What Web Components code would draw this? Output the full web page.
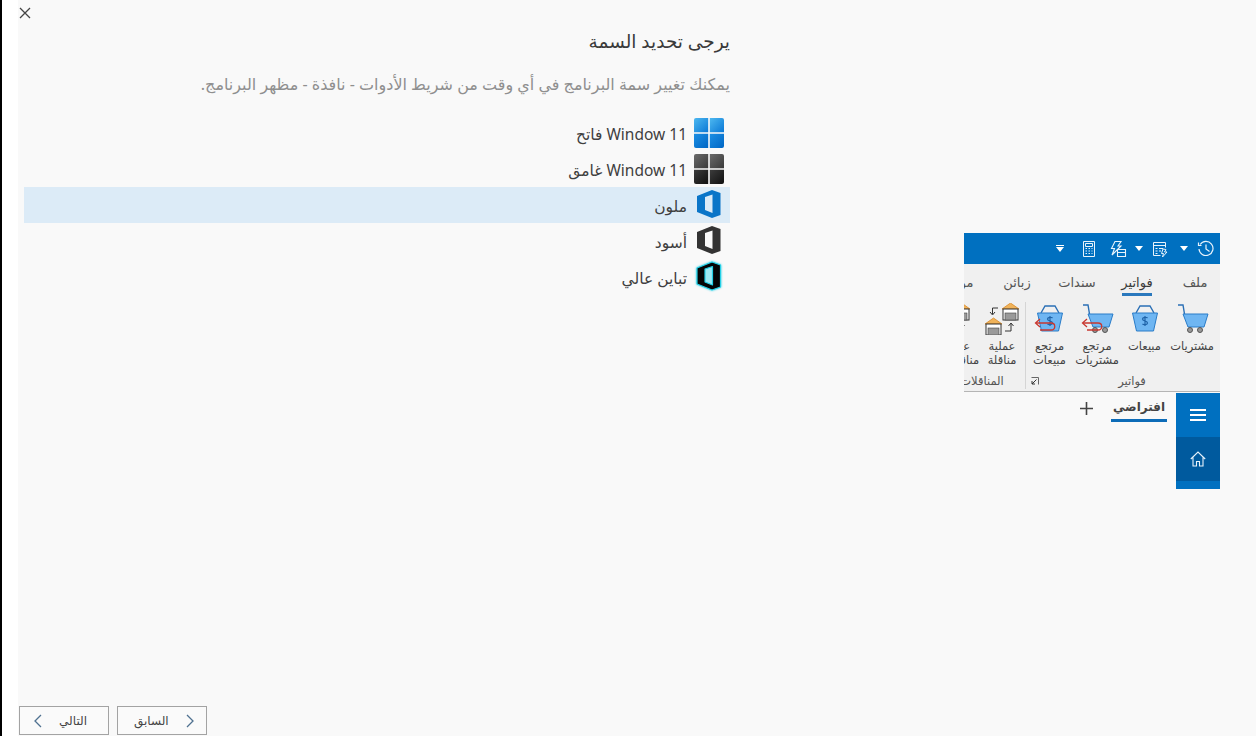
<!DOCTYPE html>
<html lang="ar">
<head>
<meta charset="utf-8">
<title>Theme</title>
<style>
html,body{margin:0;height:100%;background:#fff;overflow:hidden}
body{font-family:"Noto Sans","DejaVu Sans",sans-serif}
</style>
</head>
<body>
<x-wizard>
  <x-close slot="close"></x-close>
  <x-heading slot="title">يرجى تحديد السمة</x-heading>
  <x-hint slot="hint">يمكنك تغيير سمة البرنامج في أي وقت من شريط الأدوات - نافذة - مظهر البرنامج.</x-hint>
  <x-theme-list slot="list">
    <x-theme-option icon="win-light">Window 11 فاتح</x-theme-option>
    <x-theme-option icon="win-dark">Window 11 غامق</x-theme-option>
    <x-theme-option icon="office-color" selected>ملون</x-theme-option>
    <x-theme-option icon="office-black">أسود</x-theme-option>
    <x-theme-option icon="office-hc">تباين عالي</x-theme-option>
  </x-theme-list>
  <x-preview slot="preview"></x-preview>
  <x-nav-button slot="nav" dir-icon="left">التالي</x-nav-button>
  <x-nav-button slot="nav" dir-icon="right">السابق</x-nav-button>
</x-wizard>
<script>
const FONT='"Noto Sans","DejaVu Sans",sans-serif';
function def(name,css,html,init){
  customElements.define(name,class extends HTMLElement{
    connectedCallback(){
      if(this.shadowRoot)return;
      const r=this.attachShadow({mode:'open'});
      const body=typeof html==='function'?html(this):html;
      r.innerHTML='<style>'+css+'</style>'+body;
      if(init)init(this,r);
    }
  });
}
def('x-wizard',`
:host{display:flex;height:736px;background:#fff}
.edge{width:2px;background:#000;flex:none}
.gutter{width:16px;flex:none;background:#fff}
.main{flex:1;min-width:0;display:flex;flex-direction:column;background:#f9f9f9}
.top{height:26px;flex:none}
.body{flex:1;min-height:0;display:flex}
.left{width:706px;margin-left:6px;flex:none;display:flex;flex-direction:column;padding-top:3px}
.right{flex:1;display:flex;justify-content:flex-end;padding:207px 36px 0 0}
.foot{flex:none;display:flex;gap:8px;padding:0 0 1px 1px}
`,`<div class="edge"></div><div class="gutter"></div>
<div class="main">
 <div class="top"><slot name="close"></slot></div>
 <div class="body">
  <div class="left"><slot name="title"></slot><slot name="hint"></slot><slot name="list"></slot></div>
  <div class="right"><slot name="preview"></slot></div>
 </div>
 <div class="foot"><slot name="nav"></slot></div>
</div>`);
def('x-close',`:host{display:block;width:14px;height:14px;padding:6px 0 0 0}svg{display:block}`,
`<svg width="14" height="14" viewBox="0 0 14 14"><path d="M2 2l10 10M12 2L2 12" stroke="#444" stroke-width="1.300" fill="none"/></svg>`);
def('x-heading',`:host{display:block;direction:rtl;height:23px;font:500 18.500px/23px ${FONT};color:#3a3a3a;padding-bottom:22px}`,`<slot></slot>`);
def('x-hint',`:host{display:block;direction:rtl;height:20px;font:400 16px/20px ${FONT};color:#8f8f8f;padding-bottom:21px}`,`<slot></slot>`);
def('x-theme-list',`:host{display:flex;flex-direction:column}`,`<slot></slot>`);
const WIN=(id,a,b,c,d)=>`<svg width="30" height="30" viewBox="0 0 30 30"><defs><linearGradient id="${id}" x1="0" y1="0" x2="1" y2="1"><stop offset="0" stop-color="${a}"/><stop offset="1" stop-color="${b}"/></linearGradient><linearGradient id="${id}b" x1="0" y1="0" x2="1" y2="1"><stop offset="0" stop-color="${c}"/><stop offset="1" stop-color="${d}"/></linearGradient></defs>
<path d="M2 0h12.200v14.200H0V2a2 2 0 0 1 2-2z" fill="url(#${id})"/><path d="M15.800 0H28a2 2 0 0 1 2 2v12.200H15.800z" fill="url(#${id})"/><path d="M0 15.800h14.200V30H2a2 2 0 0 1-2-2z" fill="url(#${id}b)"/><path d="M15.800 15.800H30V28a2 2 0 0 1-2 2H15.800z" fill="url(#${id}b)"/></svg>`;
const OFFICE=(fill)=>`<svg width="30" height="30" viewBox="-3 0 30 30"><path fill="${fill}" fill-rule="evenodd" d="M0 6L15 0l8.500 3v22L15 28 0 22zM15.500 4.500L8 7v13l7.500 3z"/></svg>`;
const THEME={
 'win-light':WIN('wl','#4db8f0','#0a78d6','#1c8fe4','#0066c4'),
 'win-dark':WIN('wd','#6b6b6b','#3a3a3a','#3c3c3c','#101010'),
 'office-color':OFFICE('#0a75c8'),
 'office-black':OFFICE('#333333'),
 'office-hc':`<svg width="30" height="30" viewBox="-3 0 30 30" style="overflow:visible;filter:drop-shadow(0 0 1px #2ad4ea)"><path fill="#9eeaf3" d="M15.500 4.500L8 7v13l7.500 3z"/><path fill="#050505" stroke="#25d0e6" stroke-width="1.200" stroke-linejoin="round" fill-rule="evenodd" d="M0 6L15 0l8.500 3v22L15 28 0 22zM15.500 4.500L8 7v13l7.500 3z"/></svg>`
};
def('x-theme-option',`
:host{display:flex;direction:rtl;align-items:center;gap:7px;height:36px;padding-right:6px;font:400 15.500px/20px ${FONT};color:#3f3f3f}
:host([selected]){background:#dcebf7}
.i{width:30px;height:30px;flex:none}svg{display:block}
.t{padding-top:2px}
`,el=>`<div class="i">${THEME[el.getAttribute('icon')]}</div><div class="t"><slot></slot></div>`);
def('x-nav-button',`
:host{display:flex;align-items:center;box-sizing:border-box;width:90px;height:29px;border:1px solid #a3a3a3;background:#fafafa;font:400 12px/16px ${FONT};color:#444}
.w{display:flex;width:100%;align-items:center;padding:0 11px 0 13px;box-sizing:border-box}
.t{flex:1;direction:rtl}
.t.l{text-align:right;padding-right:10px}
.t.r{text-align:left;padding-left:3px}
svg{display:block;flex:none}
`,el=>{
 const left=el.getAttribute('dir-icon')==='left';
 const ic=`<svg width="9" height="14" viewBox="0 0 9 14"><path d="${left?'M8 1L2 7l6 6':'M1 1l6 6-6 6'}" fill="none" stroke="#4f7190" stroke-width="1.300"/></svg>`;
 return `<div class="w">${left?ic:''}<div class="t ${left?'l':'r'}"><slot></slot></div>${left?'':ic}</div>`;
});
/* ribbon icons */
const cart=(extra='')=>`<svg width="34" height="32" viewBox="0 0 34 32"><path d="M3 2h5l1.500 9" fill="none" stroke="#2a6fb5" stroke-width="1.400"/><path d="M8 11h25l-4 13H13z" fill="#6fb6f2" stroke="#2a7cc8" stroke-width="1"/><circle cx="15" cy="27" r="2.500" fill="#999" stroke="#555"/><circle cx="25" cy="27" r="2.500" fill="#999" stroke="#555"/>${extra}</svg>`;
const basket=(extra='',$='#1f63a8')=>`<svg width="34" height="32" viewBox="0 0 34 32"><path d="M8 10l4-7h10l4 7" fill="none" stroke="#2a6fb5" stroke-width="1.400"/><path d="M4.500 10h25l-4 18h-17z" fill="#6fb6f2" stroke="#2a7cc8" stroke-width="1"/><path d="M19.500 15c-1-1.200-5-1-5 1 0 2.500 5 1.500 5 4 0 2-4 2.200-5 .8M17 13v10" fill="none" stroke="${$}" stroke-width="1.200"/>${extra}</svg>`;
const ret=`<path d="M3 20h15c5 0 5 7 0 7H7" fill="none" stroke="#c8372f" stroke-width="1.300"/><path d="M7 16l-4.500 4L7 24" fill="none" stroke="#c8372f" stroke-width="1.300"/>`;
const house=(x,y)=>`<g transform="translate(${x} ${y})"><path d="M0 6L8.500 0l8.500 6z" fill="#f0b35a" stroke="#d98a2a" stroke-width=".8"/><rect x="1" y="6" width="15" height="11" fill="#fff" stroke="#333"/><rect x="3" y="10" width="11" height="7" fill="#9a9a9a" stroke="#444" stroke-width=".6"/></g>`;
const transferBody=`${house(17,0)}${house(0,15)}<path d="M13 5H7.500v6M5 9l2.500 3L10 9" fill="none" stroke="#333"/><path d="M20 28h6v-7M23.500 23l2.500-3 2.500 3" fill="none" stroke="#333"/>`;
const transfer=`<svg width="34" height="32" viewBox="0 0 34 32">${transferBody}</svg>`;
const transfer2=`<svg width="34" height="32" viewBox="8 0 34 32">${transferBody}</svg>`;
const RIB={cart:cart(),basket:basket(),cartret:cart(ret),basketret:basket(ret),transfer,transfer2};
def('x-rib-item',`
:host{display:flex;flex-direction:column;align-items:center;flex:none;font:400 11.500px/14px ${FONT};color:#444;text-align:center}
.i{height:32px;margin-bottom:4px;flex:none}
svg{display:block}
.l{white-space:nowrap}
`,el=>`<div class="i">${RIB[el.getAttribute('icon')]}</div><div class="l"><slot></slot></div>`);
def('x-rib-group',`
:host{display:flex;flex-direction:column;flex:none;height:95px;box-sizing:border-box}
.items{display:flex;flex:1;padding-top:7px}
.lab{display:flex;height:21px;align-items:center;font:400 11.500px/14px ${FONT};color:#555;margin-right:var(--lab-out,0)}
.txt{flex:1;text-align:center;white-space:nowrap;padding-left:var(--lab-in,0)}
.launch{width:18px;flex:none}
.launch svg{display:block;margin-right:5px}
`,el=>`<div class="items"><slot></slot></div><div class="lab"><div class="txt">${el.getAttribute('label')}</div>${el.hasAttribute('launcher')?'<div class="launch"><svg width="8" height="8" viewBox="0 0 8 8"><path d="M.5 .5h7v7" fill="none" stroke="#666"/><path d="M5.500 2.500L1 7M1 4v3h3" fill="none" stroke="#333"/></svg></div>':''}</div>`);
def('x-preview',`
:host{display:flex;flex-direction:column;width:256px;height:256px;direction:rtl;overflow:hidden;font-family:${FONT}}
.qat{height:31px;background:#0070c0;display:flex;align-items:center;padding-right:5px;flex:none}
.qat svg{display:block;flex:none}
.tabs{height:32px;background:#f0f0f0;display:flex;flex:none;font-size:13px;color:#555}
.tab{position:relative;flex:none;text-align:center;height:32px;line-height:36px;white-space:nowrap}
.tab.on{color:#3a3a3a;font-weight:500}
.tab.on::after{content:"";position:absolute;left:50%;margin-left:-15px;width:30px;bottom:0;height:3px;background:#2a78bd}
.rib{height:95px;background:#f0f0f0;border-bottom:1px solid #b5b5b5;display:flex;flex:none;overflow:hidden}
.sep{width:1px;background:#d5d5d5;margin:6px 0 2px;flex:none}
.bottom{flex:1;display:flex;padding-top:1px;min-height:0}
.side{width:44px;background:#0070c0;display:flex;flex-direction:column;flex:none}
.btn{height:44px;display:flex;align-items:center;justify-content:center;flex:none}
.btn.home{background:#005a9e}
.tabbar{display:flex;padding-right:9px;align-items:flex-start;gap:18px}
.dtab{width:56px;box-sizing:border-box;height:29px;border-bottom:3px solid #0d6cb8;text-align:center;font:600 12px/28px ${FONT};color:#444}
.plus{margin-top:9px;display:block}
`,`<div class="qat">
<svg width="18" height="18" viewBox="0 0 18 18" fill="none" stroke="#e8f3fb" stroke-width="1.200"><path d="M3.200 4.500A7 7 0 1 1 2 9"/><path d="M1.500 2.500v3h3"/><path d="M9 4.500V9l3.500 2.500"/></svg>
<svg style="margin-right:9px" width="8" height="5" viewBox="0 0 8 5"><path d="M0 0h8L4 5z" fill="#fff"/></svg>
<svg style="margin-right:11px" width="18" height="18" viewBox="0 0 18 18" fill="none" stroke="#e8f3fb"><path d="M2.500 2.500h12v5M2.500 2.500v13h7"/><path d="M2.500 5.500h12"/><path d="M4.500 8.500h2M8 8.500h4M4.500 11h2M8 11h2M4.500 13.500h2"/><path d="M12 9l3 .5-1.500 2.500H16l-4.500 5 1-3.500h-2z" fill="#0070c0"/></svg>
<svg style="margin-right:8px" width="8" height="5" viewBox="0 0 8 5"><path d="M0 0h8L4 5z" fill="#fff"/></svg>
<svg style="margin-right:8px" width="18" height="18" viewBox="0 0 18 18" fill="none" stroke="#e8f3fb" stroke-width="1.100"><path d="M6 1.500h6L9 6h3L3 15l2.500-6.500H2.500z"/><path d="M8.500 9.500h8v7h-8zM8.500 12.500h8"/></svg>
<svg style="margin-right:13px" width="14" height="18" viewBox="0 0 14 18" fill="none" stroke="#e8f3fb"><path d="M1.500 1.500h11v15h-11zM3.500 3.500h7v3h-7z"/><path d="M3.500 8.500h1.500M6.500 8.500h1.500M9.500 8.500h1M3.500 11h1.500M6.500 11h1.500M9.500 11h1M3.500 13.500h1.500M6.500 13.500h1.500M9.500 13.500h1"/></svg>
<svg style="margin-right:18px" width="8" height="7" viewBox="0 0 8 7"><path d="M0 0h8v1H0zM0 2h8L4 7z" fill="#fff"/></svg>
</div>
<div class="tabs">
 <div class="tab" style="width:50px">ملف</div>
 <div class="tab on" style="width:66px">فواتير</div>
 <div class="tab" style="width:54px">سندات</div>
 <div class="tab" style="width:66px">زبائن</div>
 <div class="tab" style="width:44px">مواد</div>
</div>
<div class="rib">
 <x-rib-group label="فواتير" launcher style="width:194px;padding-right:4px;--lab-out:-4px">
  <x-rib-item icon="cart" style="width:48px">مشتريات</x-rib-item>
  <x-rib-item icon="basket" style="width:47px">مبيعات</x-rib-item>
  <x-rib-item icon="cartret" style="width:48px">مرتجع<br>مشتريات</x-rib-item>
  <x-rib-item icon="basketret" style="width:47px">مرتجع<br>مبيعات</x-rib-item>
 </x-rib-group>
 <div class="sep"></div>
 <x-rib-group label="المناقلات" style="width:92px;--lab-in:6px">
  <x-rib-item icon="transfer" style="width:46px">عملية<br>مناقلة</x-rib-item>
  <x-rib-item icon="transfer2" style="width:36px">عدد<br>مناقلات</x-rib-item>
 </x-rib-group>
</div>
<div class="bottom">
 <div class="side">
  <div class="btn"><svg width="16" height="12" viewBox="0 0 16 12"><path d="M0 1h16M0 6h16M0 11h16" stroke="#fff" stroke-width="1.800"/></svg></div>
  <div class="btn home"><svg width="16" height="16" viewBox="0 0 16 16" fill="none" stroke="#e8f3fb" stroke-width="1.100"><path d="M.8 8L8 1l7.200 7M3 6.500V15h3.500v-4.500h3V15H13V6.500"/></svg></div>
 </div>
 <div class="tabbar">
  <div class="dtab">افتراضي</div>
  <svg class="plus" width="13" height="13" viewBox="0 0 13 13"><path d="M6.500 0v13M0 6.500h13" stroke="#444" stroke-width="1.600"/></svg>
 </div>
</div>`);
</script>
</body>
</html>
